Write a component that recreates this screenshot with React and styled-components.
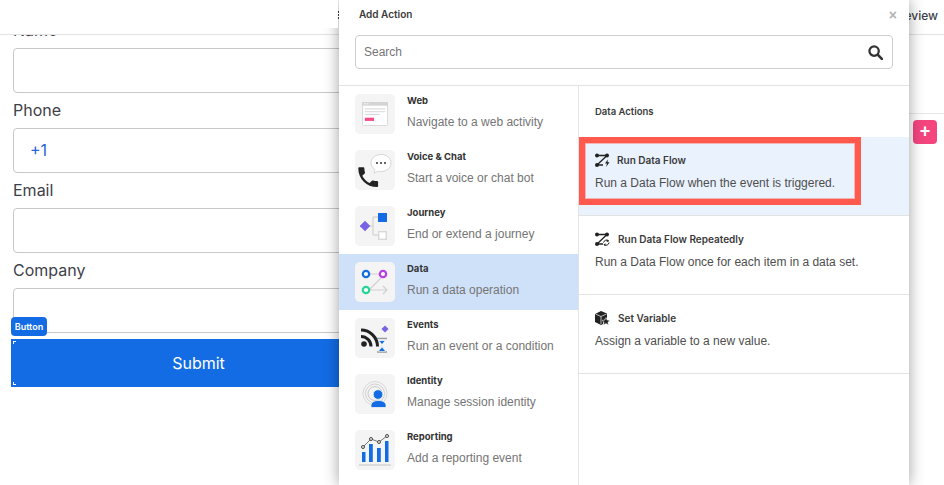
import React from 'react';
import styled, { createGlobalStyle } from 'styled-components';

const Global = createGlobalStyle`
  html, body { margin: 0; padding: 0; background: #fff; }
  * { box-sizing: border-box; }
`;

const Page = styled.div`
  position: relative;
  width: 944px;
  height: 485px;
  overflow: hidden;
  background: #fff;
  font-family: Inter, "Liberation Sans", sans-serif;
  display: grid;
  grid-template-columns: 339px 570px 35px;
`;

const FormColumn = styled.div`
  display: flex;
  flex-direction: column;
  overflow: hidden;
  height: 485px;
`;

const TopBar = styled.div`
  flex: none;
  height: 35px;
  background: #fff;
  border-bottom: 1px solid #e3e3e3;
  position: relative;
  z-index: 1;
`;

const TopPatch = styled.div`
  position: absolute;
  z-index: 3;
  left: 0;
  top: 0;
  width: 338px;
  height: 28px;
  background: #fff;
`;

const Grip = styled.div`
  position: absolute;
  z-index: 3;
  left: 338px;
  top: 11px;
  width: 1px;
  height: 8px;
  background: repeating-linear-gradient(#2b3a42 0 2px, #fff 2px 3px);
`;

const Form = styled.div`
  position: relative;
  margin-top: -23px;
  padding: 0 0 0 13px;
  display: flex;
  flex-direction: column;
`;

const Label = styled.div`
  font-size: 16px;
  line-height: 20px;
  height: 36px;
  padding-top: 8px;
  color: #3f4148;
`;

const Field = styled.div`
  height: 45px;
  width: 360px;
  border: 1px solid #c8c8c8;
  border-radius: 4px;
  background: #fff;
  font-size: 16px;
  line-height: 43px;
  padding-left: 16px;
  color: #2c63d8;
`;

const FieldLabel = styled(Label)`
  height: 35px;
  padding-top: 7px;
`;

const Tag = styled.div`
  position: absolute;
  left: 11px;
  top: 305px;
  height: 19px;
  width: 36px;
  border-radius: 4px;
  background: #136ce4;
  color: #fff;
  font-size: 9px;
  font-weight: 600;
  line-height: 19px;
  text-align: center;
`;

const SubmitButton = styled.div`
  position: relative;
  margin: 6px 0 0 -2px;
  width: 375px;
  height: 48px;
  background: #136ce4;
  color: #fff;
  font-size: 16px;
  line-height: 48px;
  text-align: center;
  &::before, &::after {
    content: '';
    position: absolute;
    left: 2px;
    width: 2px;
    height: 2px;
    border-left: 1px solid #fff;
  }
  &::before { top: 2px; border-top: 1px solid #fff; }
  &::after { bottom: 2px; border-bottom: 1px solid #fff; }
`;

const Modal = styled.div`
  position: relative;
  z-index: 2;
  height: 485px;
  background: #fff;
  box-shadow: 0 0 14px rgba(0, 0, 0, 0.38);
  display: flex;
  flex-direction: column;
`;

const ModalHead = styled.div`
  flex: none;
  height: 86px;
  padding: 8px 16px 0;
  border-bottom: 1px solid #e3e3e3;
  position: relative;
`;

const ModalTitle = styled.div`
  font-size: 10px;
  font-weight: 600;
  line-height: 12px;
  padding-left: 4px;
  color: #3a3a3a;
`;

const Close = styled.span`
  position: absolute;
  right: 12px;
  top: 8px;
  font-family: "Liberation Sans", sans-serif;
  font-weight: 700;
  font-size: 14px;
  line-height: 14px;
  color: #b4b4b4;
`;

const SearchBox = styled.div`
  margin-top: 15px;
  height: 34px;
  border: 1px solid #cfcfcf;
  border-radius: 4px;
  display: flex;
  align-items: center;
  justify-content: space-between;
  padding: 0 9px 0 8px;
  font-family: "Liberation Sans", sans-serif;
  font-size: 12px;
  color: #767676;
`;

const Columns = styled.div`
  flex: 1;
  min-height: 0;
  display: grid;
  grid-template-columns: 240px 1fr;
`;

const Categories = styled.div`
  border-right: 1px solid #e3e3e3;
  overflow: hidden;
`;

const Category = styled.div`
  height: 56px;
  padding: 8px 0 0 16px;
  display: flex;
  gap: 12px;
  background: ${p => (p.$active ? '#cfe1f9' : 'transparent')};
`;

const IconBox = styled.div`
  flex: none;
  width: 40px;
  height: 40px;
  border-radius: 5px;
  background: #f4f4f4;
  display: flex;
  align-items: center;
  justify-content: center;
`;

const CategoryTitle = styled.div`
  font-size: 9.5px;
  font-weight: 700;
  line-height: 12px;
  margin-top: 1px;
  color: #333;
`;

const CategoryDesc = styled.div`
  font-family: "Liberation Sans", sans-serif;
  font-size: 12px;
  line-height: 14px;
  margin-top: 8px;
  color: #757575;
`;

const Actions = styled.div`
  display: flex;
  flex-direction: column;
`;

const ActionsHead = styled.div`
  height: 51px;
  padding: 20px 0 0 16px;
  font-size: 9.5px;
  font-weight: 600;
  line-height: 12px;
  color: #3a3a3a;
`;

const Action = styled.div`
  position: relative;
  height: 79px;
  padding: 16px 0 0 16px;
  border-bottom: 1px solid #e3e3e3;
  background: ${p => (p.$active ? '#eaf2fe' : '#fff')};
`;

const ActionRow = styled.div`
  display: flex;
  align-items: center;
  gap: ${p => p.$gap || 8}px;
  height: 14px;
`;

const ActionTitle = styled.div`
  font-size: 10px;
  font-weight: 600;
  color: #3a3a3a;
`;

const ActionDesc = styled.div`
  font-family: "Liberation Sans", sans-serif;
  font-size: 12px;
  line-height: 14px;
  margin-top: 9px;
  color: #4e4e4e;
`;

const Highlight = styled.div`
  position: absolute;
  left: 0;
  top: 0;
  width: 282px;
  height: 68px;
  border: 6px solid #ff5a4d;
  outline: 1px solid rgba(255, 130, 120, 0.55);
  outline-offset: -7px;
`;

const RightColumn = styled.div`
  display: flex;
  flex-direction: column;
`;

const RightBar = styled.div`
  height: 35px;
  padding: 8px 6px 0 0;
  border-bottom: 1px solid #e3e3e3;
  font-size: 12px;
  font-weight: 500;
  line-height: 15px;
  color: #3a3f4a;
  display: flex;
  justify-content: flex-end;
  white-space: nowrap;
`;

const RightRule = styled.div`
  height: 79px;
  border-bottom: 1px solid #e8e8e8;
`;

const AddButton = styled.div`
  width: 24px;
  height: 24px;
  margin: 6px 0 0 4px;
  border-radius: 4px;
  background: #f4457f;
  color: #fff;
  font-family: "Liberation Sans", sans-serif;
  font-size: 18px;
  font-weight: 700;
  line-height: 23px;
  text-align: center;
`;

const SearchIcon = () => (
  <svg width="15" height="15" viewBox="0 0 16 16" fill="none" stroke="#333" strokeWidth="2.400">
    <circle cx="6.500" cy="6.500" r="5" />
    <path d="M10.300 10.300 L15 15" strokeWidth="2.800" strokeLinecap="round" />
  </svg>
);

const WebIcon = () => (
  <svg width="26" height="24" viewBox="0 0 28 26">
    <rect x="0.500" y="0.500" width="27" height="25" rx="1" fill="#fff" stroke="#d6d6d6" />
    <rect x="0" y="0" width="28" height="4" fill="#d4d4d4" />
    <rect x="2" y="1.500" width="2" height="1" fill="#fff" />
    <rect x="5" y="1.500" width="2" height="1" fill="#fff" />
    <path d="M3 7.500h22M3 10.500h22M3 13.500h16" stroke="#d2d2d2" />
    <rect x="3" y="17" width="10" height="3.500" fill="#f84c84" />
  </svg>
);

const VoiceIcon = () => (
  <svg width="36" height="36" viewBox="0 0 36 36">
    <path d="M14 11c0-5 4.500-8.500 10-8.500S34 6 34 11s-4.500 8.500-10 8.500c-1 0-2 0-3-.3l-4 2 .8-3.700C15.300 15.500 14 13.500 14 11z" fill="#fff" stroke="#d8d8d8" />
    <circle cx="20" cy="11" r="1" fill="#333" />
    <circle cx="24" cy="11" r="1" fill="#333" />
    <circle cx="28" cy="11" r="1" fill="#333" />
    <g transform="translate(-2 12) scale(1.100)">
      <path d="M6.620 10.790c1.440 2.830 3.760 5.140 6.590 6.590l2.200-2.200c.27-.27.67-.36 1.020-.24 1.120.37 2.330.57 3.570.57.55 0 1 .45 1 1V20c0 .55-.45 1-1 1-9.390 0-17-7.610-17-17 0-.55.45-1 1-1h3.500c.55 0 1 .45 1 1 0 1.250.2 2.450.57 3.570.11.35.03.74-.25 1.020l-2.200 2.200z" fill="#222" />
    </g>
  </svg>
);

const JourneyIcon = () => (
  <svg width="30" height="30" viewBox="0 0 30 30">
    <path d="M9 15h4M13 6v18M13 6h5M13 24h5" fill="none" stroke="#d8d8d8" strokeWidth="1.500" />
    <rect x="1.300" y="11.300" width="7.400" height="7.400" transform="rotate(45 5 15)" fill="#7b62e4" />
    <rect x="18" y="2" width="9" height="9" fill="#136ce4" />
    <rect x="18.700" y="20.700" width="7.600" height="7.600" fill="#fff" stroke="#d8d8d8" strokeWidth="1.400" />
  </svg>
);

const DataIcon = () => (
  <svg width="28" height="28" viewBox="0 0 28 28" fill="none">
    <path d="M8 6h11M8 22L20 10M9 22h17M22 18l4 4-4 4" stroke="#d0d0d0" strokeWidth="1.200" />
    <circle cx="5" cy="6" r="3.200" fill="#fff" stroke="#136ce4" strokeWidth="2.200" />
    <circle cx="22" cy="6" r="3.200" fill="#fff" stroke="#b83ee6" strokeWidth="2.200" />
    <circle cx="5" cy="22" r="3.200" fill="#fff" stroke="#27d694" strokeWidth="2.200" />
  </svg>
);

const EventsIcon = () => (
  <svg width="30" height="32" viewBox="0 0 30 32" fill="none">
    <rect x="22.500" y="4.500" width="5" height="5" transform="rotate(45 25 7)" fill="#7b62e4" />
    <circle cx="4" cy="22" r="2.800" fill="#222" />
    <path d="M1 14.500a10 10 0 0 1 10 10" stroke="#222" strokeWidth="3" />
    <path d="M1 8a16.500 16.500 0 0 1 16.500 16.500" stroke="#222" strokeWidth="3" />
    <path d="M17 16.500h10M17 30h10" stroke="#9a9a9a" strokeWidth="1.300" />
    <path d="M18 17h8l-4 6zM22 23l4 6.500h-8z" fill="#dfe8f5" />
    <path d="M19.500 19h5l-2.500 3zM19 29l3-3.500 3 3.500z" fill="#136ce4" />
  </svg>
);

const IdentityIcon = () => (
  <svg width="28" height="30" viewBox="0 0 28 30" fill="none">
    <circle cx="14" cy="14.500" r="12" stroke="#d8d8d8" />
    <circle cx="14" cy="14.500" r="9.500" stroke="#d0d0d0" />
    <circle cx="14" cy="14.500" r="7" stroke="#c8c8c8" />
    <circle cx="17" cy="15.500" r="4.800" fill="#136ce4" stroke="#f4f4f4" strokeWidth="0.800" />
    <path d="M10 28.500v-2c0-3 3-5 7.500-5s7.500 2 7.500 5v2z" fill="#136ce4" stroke="#f4f4f4" strokeWidth="0.800" />
  </svg>
);

const ReportIcon = () => (
  <svg width="32" height="34" viewBox="0 0 32 34" fill="none">
    <rect x="3" y="19" width="3.500" height="10" fill="#136ce4" />
    <rect x="10" y="11" width="3.800" height="18" fill="#136ce4" />
    <rect x="18" y="15" width="3.800" height="14" fill="#136ce4" />
    <rect x="26" y="8" width="3.500" height="21" fill="#136ce4" />
    <path d="M4 14L12 6l8 3 8-6" stroke="#666" strokeWidth="0.900" />
    <circle cx="4" cy="14" r="1.500" fill="#f4f4f4" stroke="#444" />
    <circle cx="12" cy="6" r="1.500" fill="#f4f4f4" stroke="#444" />
    <circle cx="20" cy="9" r="1.500" fill="#f4f4f4" stroke="#444" />
    <circle cx="28" cy="3" r="1.500" fill="#f4f4f4" stroke="#444" />
    <path d="M0 32h32" stroke="#d4d4d4" strokeWidth="1.500" />
  </svg>
);

const FlowIcon = ({ repeat }) => (
  <svg width="15" height="14" viewBox="0 0 15 14" fill="none">
    <path d="M2 2.500h10M12 2.500L2 12M2 12h6" stroke="#222" strokeWidth="1.300" />
    <circle cx="2" cy="2.500" r="2" fill="#222" />
    <circle cx="12" cy="2.500" r="2" fill="#222" />
    <circle cx="2" cy="12" r="2" fill="#222" />
    {repeat
      ? <path d="M8.500 10.500a3 3 0 0 1 5-1.500M14 10.500a3 3 0 0 1-5 2M12 7.500l1.500 1.500-1.800.5M10.500 14l-1.500-1.500 1.800-.5" stroke="#222" strokeWidth="1" />
      : <path d="M12.800 6.500L10 10.500h2l-1 3.500 3.500-4.800h-2z" fill="#222" />}
  </svg>
);

const VariableIcon = () => (
  <svg width="15" height="15" viewBox="0 0 15 15">
    <path d="M6 0l6 2.500V7L9 9l-1 4-2 1-6-3V3z" fill="#222" />
    <path d="M0.500 3L6 5.500 11.500 3M6 5.500V13" stroke="#fff" strokeWidth="0.700" fill="none" />
    <path d="M11 6.500l1.200 2.600 2.800.3-2.100 1.900.6 2.700-2.500-1.400-2.500 1.400.6-2.700-2.100-1.900 2.800-.3z" fill="#222" stroke="#fff" strokeWidth="0.500" />
  </svg>
);

const categories = [
  ['Web', 'Navigate to a web activity', <WebIcon />],
  ['Voice & Chat', 'Start a voice or chat bot', <VoiceIcon />],
  ['Journey', 'End or extend a journey', <JourneyIcon />],
  ['Data', 'Run a data operation', <DataIcon />, true],
  ['Events', 'Run an event or a condition', <EventsIcon />],
  ['Identity', 'Manage session identity', <IdentityIcon />],
  ['Reporting', 'Add a reporting event', <ReportIcon />],
];

export default function App() {
  return (
    <Page>
      <Global />
      <TopPatch />
      <Grip />
      <FormColumn>
        <TopBar />
        <Form>
          <Label>Name</Label>
          <Field />
          <FieldLabel>Phone</FieldLabel>
          <Field>+1</Field>
          <FieldLabel>Email</FieldLabel>
          <Field />
          <FieldLabel>Company</FieldLabel>
          <Field />
          <SubmitButton>Submit</SubmitButton>
          <Tag>Button</Tag>
        </Form>
      </FormColumn>
      <Modal>
        <ModalHead>
          <ModalTitle>Add Action</ModalTitle>
          <Close>×</Close>
          <SearchBox>
            Search
            <SearchIcon />
          </SearchBox>
        </ModalHead>
        <Columns>
          <Categories>
            {categories.map(([title, desc, icon, active]) => (
              <Category key={title} $active={active}>
                <IconBox>{icon}</IconBox>
                <div>
                  <CategoryTitle>{title}</CategoryTitle>
                  <CategoryDesc>{desc}</CategoryDesc>
                </div>
              </Category>
            ))}
          </Categories>
          <Actions>
            <ActionsHead>Data Actions</ActionsHead>
            <Action $active>
              <ActionRow $gap={7}><FlowIcon /><ActionTitle>Run Data Flow</ActionTitle></ActionRow>
              <ActionDesc>Run a Data Flow when the event is triggered.</ActionDesc>
              <Highlight />
            </Action>
            <Action>
              <ActionRow $gap={8}><FlowIcon repeat /><ActionTitle>Run Data Flow Repeatedly</ActionTitle></ActionRow>
              <ActionDesc>Run a Data Flow once for each item in a data set.</ActionDesc>
            </Action>
            <Action>
              <ActionRow $gap={8}><VariableIcon /><ActionTitle>Set Variable</ActionTitle></ActionRow>
              <ActionDesc>Assign a variable to a new value.</ActionDesc>
            </Action>
          </Actions>
        </Columns>
      </Modal>
      <RightColumn>
        <RightBar>eview</RightBar>
        <RightRule />
        <AddButton>+</AddButton>
      </RightColumn>
    </Page>
  );
}
